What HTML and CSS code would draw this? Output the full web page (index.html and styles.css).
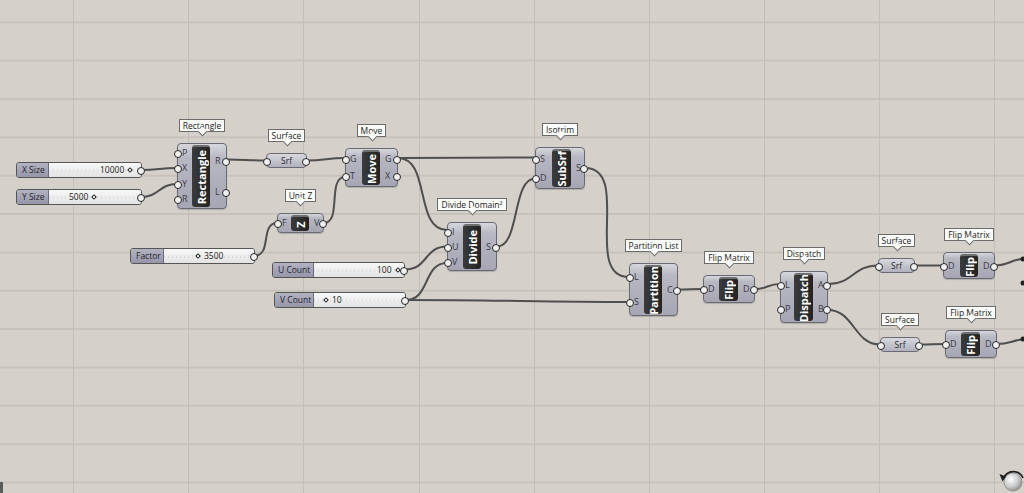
FILE: index.html
```html
<!DOCTYPE html>
<html>
<head>
<meta charset="utf-8">
<link rel="stylesheet" href="styles.css">
</head>
<body>
<div class="canvas">
  <svg class="layer" width="1024" height="493" viewBox="0 0 1024 493">
    <defs>
      <radialGradient id="ball" cx="0.38" cy="0.35" r="0.7">
        <stop offset="0" stop-color="#ffffff"/>
        <stop offset="0.6" stop-color="#c9c9c9"/>
        <stop offset="1" stop-color="#8a8a8a"/>
      </radialGradient>
    </defs>
    <g class="grid-h">
      <line x1="0" y1="22.3" x2="1024" y2="22.3"/>
      <line x1="0" y1="60.6" x2="1024" y2="60.6"/>
      <line x1="0" y1="99" x2="1024" y2="99"/>
      <line x1="0" y1="137.3" x2="1024" y2="137.3"/>
      <line x1="0" y1="175.7" x2="1024" y2="175.7"/>
      <line x1="0" y1="214" x2="1024" y2="214"/>
      <line x1="0" y1="252.4" x2="1024" y2="252.4"/>
      <line x1="0" y1="290.7" x2="1024" y2="290.7"/>
      <line x1="0" y1="329.1" x2="1024" y2="329.1"/>
      <line x1="0" y1="367.5" x2="1024" y2="367.5"/>
      <line x1="0" y1="405.8" x2="1024" y2="405.8"/>
      <line x1="0" y1="444.2" x2="1024" y2="444.2"/>
      <line x1="0" y1="482.5" x2="1024" y2="482.5"/>
    </g>
    <g class="grid-v">
      <line x1="73.5" y1="0" x2="73.5" y2="493"/>
      <line x1="188.5" y1="0" x2="188.5" y2="493"/>
      <line x1="303.5" y1="0" x2="303.5" y2="493"/>
      <line x1="419.5" y1="0" x2="419.5" y2="493"/>
      <line x1="534.5" y1="0" x2="534.5" y2="493"/>
      <line x1="649.5" y1="0" x2="649.5" y2="493"/>
      <line x1="764.5" y1="0" x2="764.5" y2="493"/>
      <line x1="879.5" y1="0" x2="879.5" y2="493"/>
      <line x1="994.5" y1="0" x2="994.5" y2="493"/>
    </g>
    <g class="wire">
      <path d="M141,170 C159,170 159,168 177,168"/>
      <path d="M141,197 C159,197 159,184 177,184"/>
      <path d="M227,159.5 C246,159.5 246,160.5 266,160.5"/>
      <path d="M307,160.5 C326,160.5 326,158 345,158"/>
      <path d="M398,158 C466,158 466,157.5 535,157.5"/>
      <path d="M398,158 C431,158 414,230 447,230"/>
      <path d="M324,223 C342,223 327,177 345,177"/>
      <path d="M255,255.5 C272,255.5 260,223 277,223"/>
      <path d="M405,269.5 C428,269.5 424,246.5 447,246.5"/>
      <path d="M406,300 C430,300 423,263 447,263"/>
      <path d="M406,300 C500,300 540,302 629,302"/>
      <path d="M497,246.5 C520,246.5 512,178.5 535,178.5"/>
      <path d="M585,168 C632,168 582,277 629,277"/>
      <path d="M678,289.5 C690,289.5 691,289 703,289"/>
      <path d="M755,289 C768,289 767,284 780,284"/>
      <path d="M828,284 C853,284 853,265.5 878,265.5"/>
      <path d="M828,310 C854,310 854,344.5 880,344.5"/>
      <path d="M915,265.5 C929,265.5 929,265.5 943,265.5"/>
      <path d="M920,344.5 C932,344.5 933,344 945,344"/>
      <path d="M995,265.5 C1010,265.5 1012,258 1030,258"/>
      <path d="M997,344 C1012,344 1012,339 1030,339"/>
    </g>
    <g class="edge-dots">
      <circle cx="1023" cy="259" r="2.5"/>
      <circle cx="1023" cy="283" r="2.5"/>
      <circle cx="1023" cy="339" r="2.5"/>
    </g>
    <rect x="0" y="482" width="3" height="11" fill="#5c5c5c"/>
    <g class="nav">
      <circle cx="1013" cy="482" r="9" fill="url(#ball)" stroke="#8a8a8a" stroke-width="0.8"/>
      <path d="M1003.5,478.5 A10.5,10.5 0 0 1 1023,478" fill="none" stroke="#1f1f1f" stroke-width="1.6"/>
      <path d="M999.5,474 L1006,476.5 L1002.5,481.5 Z" fill="#1f1f1f"/>
    </g>
  </svg>

  <!-- sliders -->
  <div class="slider s-x"><div class="sl-label">X Size</div><div class="sl-val"><span class="v">10000<i class="dia"></i></span></div></div>
  <div class="slider s-y"><div class="sl-label">Y Size</div><div class="sl-val"><span class="v">5000<i class="dia"></i></span></div></div>
  <div class="slider s-f"><div class="sl-label">Factor</div><div class="sl-val"><span class="v"><i class="dia"></i>3500</span></div></div>
  <div class="slider s-u"><div class="sl-label">U Count</div><div class="sl-val"><span class="v">100<i class="dia"></i></span></div></div>
  <div class="slider s-v"><div class="sl-label">V Count</div><div class="sl-val"><span class="v"><i class="dia"></i>10</span></div></div>

  <!-- Rectangle -->
  <div class="wrap n-rect">
    <div class="tip">Rectangle</div>
    <div class="comp">
      <div class="ins"><span class="p">P</span><span class="p">X</span><span class="p">Y</span><span class="p">R</span></div>
      <div class="core"><span>Rectangle</span></div>
      <div class="outs"><span class="p">R</span><span class="p">L</span></div>
    </div>
  </div>

  <!-- Surface 1 -->
  <div class="wrap n-srf1">
    <div class="tip">Surface</div>
    <div class="param">Srf</div>
  </div>

  <!-- Move -->
  <div class="wrap n-move">
    <div class="tip">Move</div>
    <div class="comp">
      <div class="ins"><span class="p">G</span><span class="p">T</span></div>
      <div class="core"><span>Move</span></div>
      <div class="outs"><span class="p">G</span><span class="p">X</span></div>
    </div>
  </div>

  <!-- Unit Z -->
  <div class="wrap n-unitz">
    <div class="tip">Unit Z</div>
    <div class="comp">
      <div class="ins"><span class="p">F</span></div>
      <div class="core"><span class="rot">Z</span></div>
      <div class="outs"><span class="p">V</span></div>
    </div>
  </div>

  <!-- Divide Domain² -->
  <div class="wrap n-div">
    <div class="tip">Divide Domain²</div>
    <div class="comp">
      <div class="ins"><span class="p">I</span><span class="p">U</span><span class="p">V</span></div>
      <div class="core"><span>Divide</span></div>
      <div class="outs"><span class="p">S</span></div>
    </div>
  </div>

  <!-- Isotrim -->
  <div class="wrap n-iso">
    <div class="tip">Isotrim</div>
    <div class="comp">
      <div class="ins"><span class="p">S</span><span class="p">D</span></div>
      <div class="core"><span>SubSrf</span></div>
      <div class="outs"><span class="p">S</span></div>
    </div>
  </div>

  <!-- Partition List -->
  <div class="wrap n-part">
    <div class="tip">Partition List</div>
    <div class="comp">
      <div class="ins"><span class="p">L</span><span class="p">S</span></div>
      <div class="core"><span>Partition</span></div>
      <div class="outs"><span class="p">C</span></div>
    </div>
  </div>

  <!-- Flip Matrix 1 -->
  <div class="wrap n-flip1">
    <div class="tip">Flip Matrix</div>
    <div class="comp">
      <div class="ins"><span class="p">D</span></div>
      <div class="core"><span>Flip</span></div>
      <div class="outs"><span class="p">D</span></div>
    </div>
  </div>

  <!-- Dispatch -->
  <div class="wrap n-disp">
    <div class="tip">Dispatch</div>
    <div class="comp">
      <div class="ins"><span class="p">L</span><span class="p">P</span></div>
      <div class="core"><span>Dispatch</span></div>
      <div class="outs"><span class="p">A</span><span class="p">B</span></div>
    </div>
  </div>

  <!-- Surface 2 -->
  <div class="wrap n-srf2">
    <div class="tip">Surface</div>
    <div class="param">Srf</div>
  </div>

  <!-- Flip Matrix 2 -->
  <div class="wrap n-flip2">
    <div class="tip">Flip Matrix</div>
    <div class="comp">
      <div class="ins"><span class="p">D</span></div>
      <div class="core"><span>Flip</span></div>
      <div class="outs"><span class="p">D</span></div>
    </div>
  </div>

  <!-- Surface 3 -->
  <div class="wrap n-srf3">
    <div class="tip">Surface</div>
    <div class="param">Srf</div>
  </div>

  <!-- Flip Matrix 3 -->
  <div class="wrap n-flip3">
    <div class="tip">Flip Matrix</div>
    <div class="comp">
      <div class="ins"><span class="p">D</span></div>
      <div class="core"><span>Flip</span></div>
      <div class="outs"><span class="p">D</span></div>
    </div>
  </div>
</div>
</body>
</html>
```

FILE: styles.css
```css
* { box-sizing: border-box; }
html, body { margin: 0; padding: 0; }
body {
  width: 1024px;
  height: 493px;
  overflow: hidden;
  background: #d5d1ca;
  font-family: "Open Sans", "Noto Sans", "DejaVu Sans", sans-serif;
  color: #2a2a33;
}
.canvas { position: relative; width: 1024px; height: 493px; }
.layer { position: absolute; left: 0; top: 0; }

.grid-h line { stroke: #c7c3bc; stroke-width: 2; }
.grid-v line { stroke: #c2beb7; stroke-width: 1; }
.wire path { fill: none; stroke: #4f4f4f; stroke-width: 2; }
.edge-dots circle { fill: #222; }

/* tooltips and node wrappers */
.wrap {
  position: absolute;
  display: flex;
  flex-direction: column;
  align-items: center;
  gap: 11px;
}
.tip {
  position: relative;
  height: 13px;
  padding: 0 3px;
  border: 1px solid #6b6b6b;
  background: #fbfbfa;
  font-size: 8.5px;
  line-height: 11px;
  white-space: nowrap;
  color: #222;
}
.tip::after {
  content: "";
  position: absolute;
  left: 50%;
  bottom: -4px;
  width: 6px;
  height: 6px;
  margin-left: -3px;
  background: #fbfbfa;
  border-right: 1px solid #6b6b6b;
  border-bottom: 1px solid #6b6b6b;
  transform: rotate(45deg);
}

/* components */
.comp {
  align-self: stretch;
  display: flex;
  padding: 1px 0;
  border: 1px solid #6a6a74;
  border-radius: 4px;
  background: linear-gradient(#d6d6dc, #b8b8c3 22%, #a6a6b4);
  box-shadow: 0 1px 1px rgba(0, 0, 0, 0.18);
}
.ins, .outs {
  display: flex;
  flex-direction: column;
  justify-content: space-around;
}
.ins { width: 14px; }
.outs { flex: 1; }
.p {
  position: relative;
  font-size: 9px;
  line-height: 10px;
  color: #3a3a48;
}
.ins .p { padding-left: 4px; }
.outs .p { padding-left: 5px; }

.ins .p::before,
.outs .p::after,
.slider::after,
.param::before,
.param::after {
  content: "";
  position: absolute;
  top: 50%;
  width: 6px;
  height: 6px;
  margin-top: -3px;
  border: 1px solid #262626;
  border-radius: 50%;
  background: #f0f0f0;
}
.ins .p::before { left: -4px; }
.outs .p::after { right: -4px; }

.core {
  width: 18px;
  border-radius: 3px;
  border-top: 2px solid #6f6f6f;
  background: linear-gradient(90deg, #3b3b3b, #232323);
  display: flex;
  align-items: center;
  justify-content: center;
  overflow: hidden;
}
.core span {
  writing-mode: vertical-rl;
  transform: rotate(180deg);
  color: #fff;
  font-weight: 700;
  font-size: 11px;
  line-height: 1;
  white-space: nowrap;
}
.core .rot {
  writing-mode: horizontal-tb;
  transform: rotate(-90deg);
}

/* parameter (Srf) */
.param {
  align-self: stretch;
  position: relative;
  height: 15px;
  border: 1px solid #6a6a74;
  border-radius: 4px;
  background: linear-gradient(#d8d8de, #b2b2be);
  font-size: 8.5px;
  line-height: 13px;
  text-align: center;
  color: #2a2a33;
}
.param::before { left: -4px; }
.param::after { right: -4px; }

/* sliders */
.slider {
  position: absolute;
  display: flex;
  height: 16px;
  border: 1px solid #555;
  border-radius: 3px;
}
.slider::after { right: -4px; }
.sl-label {
  border-right: 1px solid #6c6c78;
  border-radius: 2px 0 0 2px;
  background: linear-gradient(#b3b2c2, #9796aa);
  font-size: 8.5px;
  line-height: 14px;
  padding-left: 5px;
  white-space: nowrap;
  color: #24242c;
}
.sl-val {
  flex: 1;
  display: flex;
  align-items: center;
  border-radius: 0 2px 2px 0;
  font-size: 8.5px;
  line-height: 14px;
  color: #222;
  background:
    repeating-linear-gradient(90deg, rgba(0,0,0,0.07) 0 1px, transparent 1px 4px) 0 50% / 100% 3px no-repeat,
    linear-gradient(#f8f8f8, #e3e3e3);
}
.v { display: flex; align-items: center; white-space: nowrap; }
.dia {
  display: inline-block;
  width: 4px;
  height: 4px;
  margin: 0 4px;
  border: 1.3px solid #1c1c1c;
  background: #fff;
  transform: rotate(45deg);
}

.s-x { left: 16px; top: 162px; width: 126px; }
.s-x .sl-label { width: 32px; }
.s-x .v { margin-left: 51px; }
.s-y { left: 16px; top: 189px; width: 126px; }
.s-y .sl-label { width: 32px; }
.s-y .v { margin-left: 20px; }
.s-f { left: 130px; top: 248px; width: 125px; }
.s-f .sl-label { width: 33px; }
.s-f .v { margin-left: 28px; }
.s-u { left: 272px; top: 262px; width: 133px; }
.s-u .sl-label { width: 41px; }
.s-u .v { margin-left: 63px; }
.s-v { left: 274px; top: 292px; width: 132px; }
.s-v .sl-label { width: 39px; }
.s-v .v { margin-left: 6px; }

/* node placement on the canvas */
.n-rect { left: 177px; top: 119px; width: 50px; }
.n-rect .comp { height: 66px; }
.n-srf1 { left: 266px; top: 129px; width: 41px; }
.n-move { left: 345px; top: 124px; width: 53px; }
.n-move .comp { height: 39px; }
.n-move .ins { width: 16px; }
.n-unitz { left: 277px; top: 189px; width: 47px; }
.n-unitz .comp { height: 20px; }
.n-unitz .ins { width: 13px; }
.n-div { left: 447px; top: 198px; width: 50px; }
.n-div .comp { height: 49px; }
.n-div .ins { width: 15px; }
.n-iso { left: 535px; top: 123px; width: 50px; }
.n-iso .comp { height: 42px; }
.n-iso .ins { width: 16px; }
.n-iso .core { width: 19px; }
.n-part { left: 629px; top: 239px; width: 49px; }
.n-part .comp { height: 53px; }
.n-flip1 { left: 703px; top: 251px; width: 52px; }
.n-flip1 .comp { height: 28px; }
.n-flip1 .ins { width: 15px; }
.n-flip1 .core { width: 19px; }
.n-disp { left: 780px; top: 247px; width: 48px; }
.n-disp .comp { height: 52px; }
.n-disp .ins { width: 13px; }
.n-disp .core { width: 19px; }
.n-srf2 { left: 878px; top: 234px; width: 37px; }
.n-flip2 { left: 943px; top: 228px; width: 52px; }
.n-flip2 .comp { height: 27px; }
.n-flip2 .ins { width: 16px; }
.n-srf3 { left: 880px; top: 313px; width: 40px; }
.n-flip3 { left: 945px; top: 306px; width: 52px; }
.n-flip3 .comp { height: 28px; }
.n-flip3 .ins { width: 15px; }
.n-flip3 .core { width: 19px; }
```
